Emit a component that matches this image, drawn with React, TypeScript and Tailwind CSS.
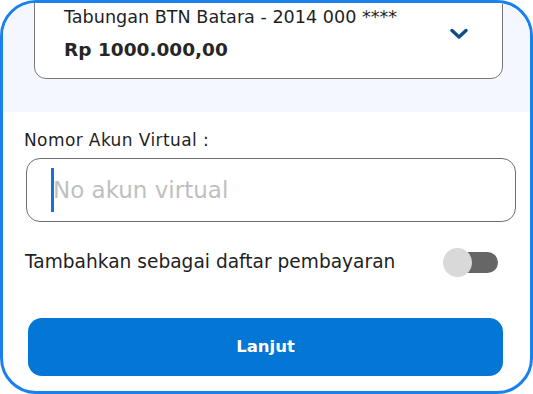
export default function App() {
  const font = { fontFamily: '"DejaVu Sans", "Liberation Sans", sans-serif' };

  return (
    <div className="h-[394px] w-[533px] bg-white" style={font}>
      <div className="flex h-full w-full flex-col overflow-hidden rounded-[36px] border-[3px] border-[#1a80f0] bg-white">
        {/* account card area */}
        <div className="h-[109px] shrink-0 bg-[#f4f8fe] pl-[31px] pr-[27px]">
          <div className="-mt-[24px] flex h-[100px] items-end justify-between rounded-[12px] border border-[#777] bg-white pb-[16px] pl-[29px] pr-[34px]">
            <div className="flex flex-col">
              <span className="text-[17.6px] leading-[22px] text-[#1f1f1f]">
                Tabungan BTN Batara - 2014 000 ****
              </span>
              <span className="mt-[9px] text-[18.5px] font-bold leading-[25px] text-[#262626]">
                Rp 1000.000,00
              </span>
            </div>
            <svg width="18" height="12" viewBox="0 0 18 12" className="mb-[22px]">
              <path
                d="M2 2.5 L9 9 L16 2.5"
                fill="none"
                stroke="#0e4d86"
                strokeWidth="3.4"
                strokeLinecap="round"
                strokeLinejoin="round"
              />
            </svg>
          </div>
        </div>

        {/* form */}
        <div className="flex flex-1 flex-col pl-[21px] pr-[14px] pt-[17px]">
          <label className="text-[17px] leading-[22px] tracking-[0.4px] text-[#1f1f1f]">
            Nomor Akun Virtual :
          </label>
          <div className="mt-[7px] ml-[2px] flex h-[64px] items-center rounded-[14px] border border-[#6e6e6e] pl-[24px]">
            <span className="h-[44px] w-[3px] bg-[#1a6fd8]" />
            <span className="-ml-[1px] text-[23px] text-[#bfbfbf]">No akun virtual</span>
          </div>

          <div className="mt-[27px] ml-[1px] mr-[18px] flex items-center justify-between">
            <span className="text-[18.6px] leading-[26px] text-[#1f1f1f]">
              Tambahkan sebagai daftar pembayaran
            </span>
            <div className="relative h-[21px] w-[55px]">
              <div className="absolute right-0 top-0 h-[21px] w-[43px] rounded-full bg-[#666666]" />
              <div className="absolute left-0 top-[-4px] h-[29px] w-[29px] rounded-full bg-[#d9d9d9]" />
            </div>
          </div>

          <button className="mt-[43px] ml-[4px] mr-[13px] flex h-[58px] items-center justify-center rounded-[14px] bg-[#0477d6] text-[16.5px] font-bold text-white">
            Lanjut
          </button>
        </div>
      </div>
    </div>
  );
}
